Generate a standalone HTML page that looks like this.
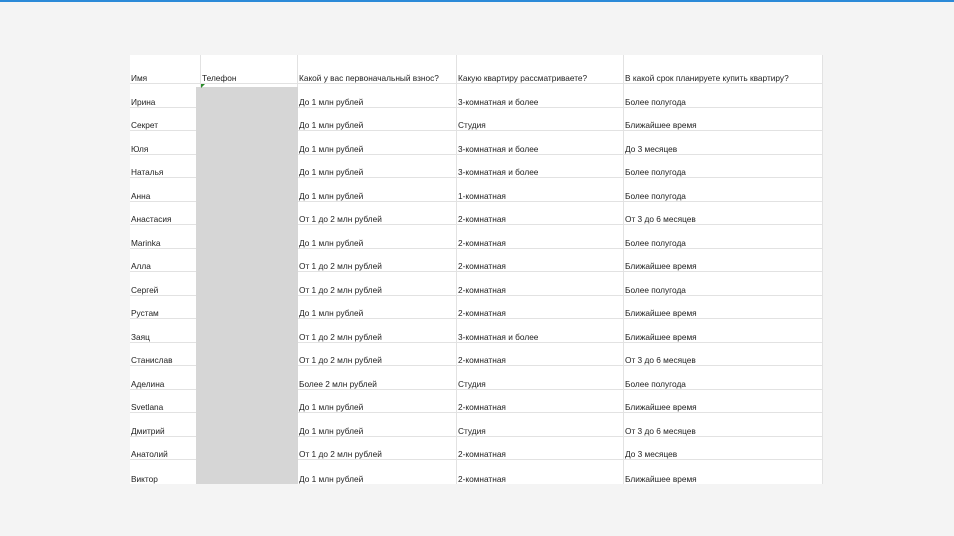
<!DOCTYPE html>
<html><head><meta charset="utf-8"><style>
body{margin:0;width:954px;height:536px;background:#f4f4f4;position:relative;overflow:hidden;font-family:"Liberation Sans","DejaVu Sans",sans-serif;}
.top{position:absolute;left:0;top:0;width:954px;height:2px;background:#2b8ad8;}
.sheet{position:absolute;left:130px;top:55px;width:693px;height:429px;background:#fff;overflow:hidden;}
.r{position:absolute;left:0;width:693px;display:grid;grid-template-columns:71px 97px 159px 167px 199px;box-sizing:border-box;border-bottom:1px solid #e2e2e2;}
.r div{font-size:8.3px;color:#222;border-right:1px solid #e2e2e2;white-space:nowrap;overflow:hidden;padding:0 0 0 1px;display:flex;align-items:flex-end;box-sizing:border-box;}
.h{top:0;height:29px;}
.gray{position:absolute;left:66px;top:32px;width:102px;height:400px;background:#d6d6d6;}
.tri{position:absolute;left:71px;top:29px;width:0;height:0;border-top:4px solid #2a8a2a;border-right:4px solid transparent;}
</style></head><body>
<div class="top"></div>
<div class="sheet">
<div class="r h"><div>Имя</div><div>Телефон</div><div>Какой у вас первоначальный взнос?</div><div>Какую квартиру рассматриваете?</div><div>В какой срок планируете купить квартиру?</div></div>
<div class="r" style="top:29px;height:23.53px"><div>Ирина</div><div></div><div>До 1 млн рублей</div><div>3-комнатная и более</div><div>Более полугода</div></div>
<div class="r" style="top:52.53px;height:23.53px"><div>Секрет</div><div></div><div>До 1 млн рублей</div><div>Студия</div><div>Ближайшее время</div></div>
<div class="r" style="top:76.06px;height:23.53px"><div>Юля</div><div></div><div>До 1 млн рублей</div><div>3-комнатная и более</div><div>До 3 месяцев</div></div>
<div class="r" style="top:99.59px;height:23.53px"><div>Наталья</div><div></div><div>До 1 млн рублей</div><div>3-комнатная и более</div><div>Более полугода</div></div>
<div class="r" style="top:123.12px;height:23.53px"><div>Анна</div><div></div><div>До 1 млн рублей</div><div>1-комнатная</div><div>Более полугода</div></div>
<div class="r" style="top:146.65px;height:23.53px"><div>Анастасия</div><div></div><div>От 1 до 2 млн рублей</div><div>2-комнатная</div><div>От 3 до 6 месяцев</div></div>
<div class="r" style="top:170.18px;height:23.53px"><div>Marinka</div><div></div><div>До 1 млн рублей</div><div>2-комнатная</div><div>Более полугода</div></div>
<div class="r" style="top:193.71px;height:23.53px"><div>Алла</div><div></div><div>От 1 до 2 млн рублей</div><div>2-комнатная</div><div>Ближайшее время</div></div>
<div class="r" style="top:217.24px;height:23.53px"><div>Сергей</div><div></div><div>От 1 до 2 млн рублей</div><div>2-комнатная</div><div>Более полугода</div></div>
<div class="r" style="top:240.77px;height:23.53px"><div>Рустам</div><div></div><div>До 1 млн рублей</div><div>2-комнатная</div><div>Ближайшее время</div></div>
<div class="r" style="top:264.3px;height:23.53px"><div>Заяц</div><div></div><div>От 1 до 2 млн рублей</div><div>3-комнатная и более</div><div>Ближайшее время</div></div>
<div class="r" style="top:287.83px;height:23.53px"><div>Станислав</div><div></div><div>От 1 до 2 млн рублей</div><div>2-комнатная</div><div>От 3 до 6 месяцев</div></div>
<div class="r" style="top:311.36px;height:23.53px"><div>Аделина</div><div></div><div>Более 2 млн рублей</div><div>Студия</div><div>Более полугода</div></div>
<div class="r" style="top:334.89px;height:23.53px"><div>Svetlana</div><div></div><div>До 1 млн рублей</div><div>2-комнатная</div><div>Ближайшее время</div></div>
<div class="r" style="top:358.42px;height:23.53px"><div>Дмитрий</div><div></div><div>До 1 млн рублей</div><div>Студия</div><div>От 3 до 6 месяцев</div></div>
<div class="r" style="top:381.95px;height:23.53px"><div>Анатолий</div><div></div><div>От 1 до 2 млн рублей</div><div>2-комнатная</div><div>До 3 месяцев</div></div>
<div class="r" style="top:405.48px;height:23.53px;border-bottom:none"><div>Виктор</div><div></div><div>До 1 млн рублей</div><div>2-комнатная</div><div>Ближайшее время</div></div>
<div class="gray"></div>
<div class="tri"></div>
</div>
</body></html>
